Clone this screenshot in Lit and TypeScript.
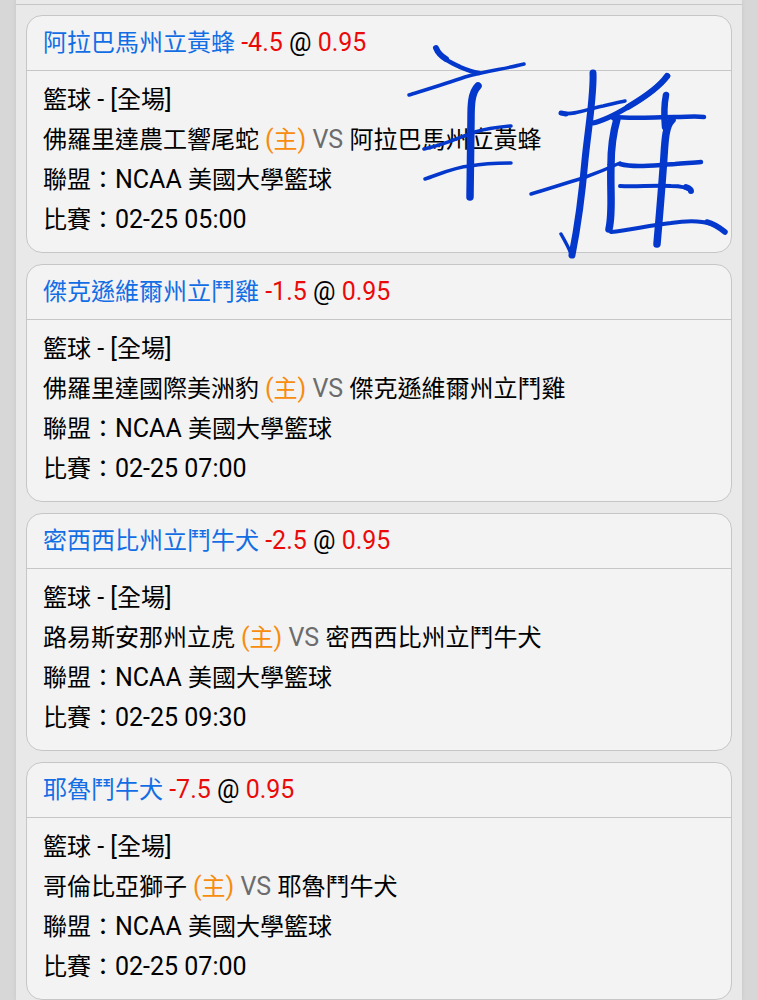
import { LitElement, html, css, svg } from "lit";
import { customElement, property } from "lit/decorators.js";

interface Bet {
  pick: string;
  line: string;
  odds: string;
  home: string;
  away: string;
  time: string;
}

const BETS: Bet[] = [
  { pick: "阿拉巴馬州立黃蜂", line: "-4.5", odds: "0.95", home: "佛羅里達農工響尾蛇", away: "阿拉巴馬州立黃蜂", time: "02-25 05:00" },
  { pick: "傑克遜維爾州立鬥雞", line: "-1.5", odds: "0.95", home: "佛羅里達國際美洲豹", away: "傑克遜維爾州立鬥雞", time: "02-25 07:00" },
  { pick: "密西西比州立鬥牛犬", line: "-2.5", odds: "0.95", home: "路易斯安那州立虎", away: "密西西比州立鬥牛犬", time: "02-25 09:30" },
  { pick: "耶魯鬥牛犬", line: "-7.5", odds: "0.95", home: "哥倫比亞獅子", away: "耶魯鬥牛犬", time: "02-25 07:00" },
];

// Freehand pen strokes: [path, width]
const STROKES: [string, number][] = [
  ["M436 48C438 53 441 56 446 59", 6],
  ["M436 48C440 58 450 62 460 67C467 70 473 72 479 73", 4.5],
  ["M409 95C425 90 445 84 465 77C485 71 505 69 524 64", 3.5],
  ["M478 86C471 93 471 106 471 120L470 197", 7.5],
  ["M424 149C445 145 460 137 475 132C488 128 500 127 511 126", 3.5],
  ["M425 179C440 174 455 167 470 166C486 163 498 163 511 163", 3.5],
  ["M593 73C594 95 588 130 585 160C582 195 578 225 572 255", 7],
  ["M571 254C569 248 565 241 561 234", 3.5],
  ["M561 113C574 116 590 108 603 106C612 104 619 102 625 101", 3.5],
  ["M561 113L566 114", 5],
  ["M531 194C548 189 566 183 583 178C597 173 609 168 620 163", 3.5],
  ["M593 123C603 121 618 113 628 107C645 97 660 86 668 76", 5],
  ["M628 107C645 97 660 86 667 76", 6],
  ["M614 117L617 119C613 133 611 150 611 165C610 190 613 212 609 229", 7.5],
  ["M614 117C635 119 655 117 675 117C687 117 695 116 704 117", 4.5],
  ["M666 95C664 105 664 116 665 127", 6.5],
  ["M672 120C664 127 665 148 663 170C661 198 659 220 657 244", 7.5],
  ["M620 164C635 168 655 165 675 164C686 163 694 163 701 162", 4.5],
  ["M620 186C636 187 653 185 671 186C682 186 688 188 691 191", 4],
  ["M686 187C689 188 691 189 691 191", 6],
  ["M611 232C630 230 651 225 671 223C690 220 713 220 725 232", 4],
  ["M707 222C715 224 720 228 725 232", 5.5],
];

@customElement("bet-card")
export class BetCard extends LitElement {
  @property({ attribute: false }) bet!: Bet;

  static styles = css`
    :host { display: block; }
    .card {
      border: 1px solid #c6c6c6;
      border-radius: 16px;
      background: #f3f3f3;
      color: #000;
      overflow: hidden;
    }
    .title, .row {
      margin: 0;
      font-size: 24px;
      font-weight: 400;
      white-space: pre-wrap;
    }
    .title {
      padding: 0 16px;
      line-height: 54px;
      border-bottom: 1px solid #c6c6c6;
    }
    .body { padding: 9px 16px 12px; }
    .row { line-height: 40px; }
    .latin { font-size: 25px; line-height: 1; }
    .team { color: #126ee4; }
    .red { color: #ea0a0a; }
    .home { color: #f88c0c; }
    .vs { color: #6c6c6c; }
  `;

  render() {
    const b = this.bet;
    return html`
      <article class="card">
        <h2 class="title"><span class="team">${b.pick}</span><span class="latin"> <span class="red">${b.line}</span> @ <span class="red">${b.odds}</span></span></h2>
        <div class="body">
          <p class="row">籃球<span class="latin"> - [</span>全場<span class="latin">]</span></p>
          <p class="row">${b.home} <span class="home"><span class="latin">(</span>主<span class="latin">)</span></span><span class="latin vs"> VS </span>${b.away}</p>
          <p class="row">聯盟：<span class="latin">NCAA </span>美國大學籃球</p>
          <p class="row">比賽：<span class="latin">${b.time}</span></p>
        </div>
      </article>
    `;
  }
}

@customElement("app-root")
export class AppRoot extends LitElement {
  static styles = css`
    :host {
      display: block;
      position: relative;
      min-height: 100vh;
      box-sizing: border-box;
      padding: 0 16px;
      background: #d7d7d7;
      font-family: Roboto, "Noto Sans CJK TC", sans-serif;
    }
    .panel {
      min-height: 100vh;
      box-sizing: border-box;
      padding-top: 4px;
      background: #e9e9e9;
      box-shadow: 0 0 4px #c6c6c6;
    }
    .list {
      display: grid;
      gap: 11px;
      padding: 10px 10px 0;
      border-top: 1px solid #c6c6c6;
    }
    .ink {
      position: absolute;
      top: 0;
      left: 0;
      pointer-events: none;
    }
  `;

  render() {
    return html`
      <main class="panel">
        <section class="list">${BETS.map((b) => html`<bet-card .bet=${b}></bet-card>`)}</section>
      </main>
      <svg class="ink" width="758" height="270" viewBox="0 0 758 270" fill="none" stroke="#0438cc" stroke-linecap="round" stroke-linejoin="round" aria-hidden="true">
        ${STROKES.map(([d, w]) => svg`<path d=${d} stroke-width=${w}></path>`)}
      </svg>
    `;
  }
}
